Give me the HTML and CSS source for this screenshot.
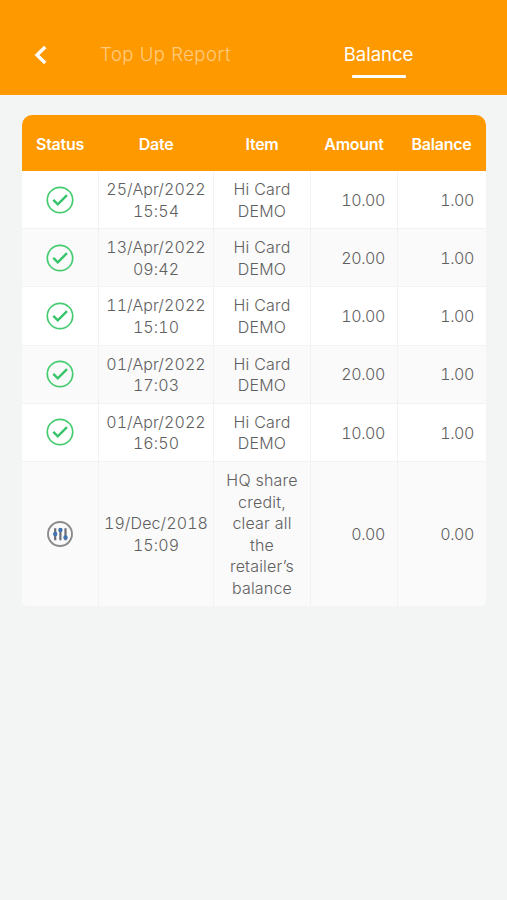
FILE: index.html
```html
<!DOCTYPE html>
<html lang="en">
<head>
    <meta charset="UTF-8">
    <meta name="viewport" content="width=device-width, initial-scale=1.0">
    <title>Balance</title>
    <link rel="stylesheet" href="styles.css">
</head>
<body>
    <svg width="0" height="0" class="icon-defs">
        <symbol id="success" viewBox="0 0 28 28">
            <circle cx="14" cy="14" r="12.7" fill="none" stroke="#45cc71" stroke-width="1.7"/>
            <path d="M7.3 13.8l4.5 4.5 9.2-9.2" fill="none" stroke="#35c568" stroke-width="2.4"/>
        </symbol>
        <symbol id="adjust" viewBox="0 0 28 28">
            <circle cx="14" cy="14" r="12" fill="none" stroke="#8b8b8b" stroke-width="1.9"/>
            <path d="M9.2 8.3v12M14.4 8.3v12M19.5 8.3v12" stroke="#696d73" stroke-width="2.2"/>
            <g fill="#4173b0">
                <circle cx="9.2" cy="14" r="2.2"/>
                <circle cx="14.4" cy="10" r="2.2"/>
                <circle cx="19.5" cy="17.5" r="2.2"/>
            </g>
        </symbol>
    </svg>

    <div class="header">
        <a class="back">
            <svg width="14" height="20" viewBox="0 0 14 20"><path d="M11.2 2L3 10l8.2 8" fill="none" stroke="#fff" stroke-width="3.4"/></svg>
        </a>
        <div class="tabs">
            <a class="tab">Top Up Report</a>
            <a class="tab active">Balance</a>
        </div>
    </div>

    <div class="report">
        <table>
            <colgroup>
                <col class="col-status">
                <col class="col-date">
                <col class="col-item">
                <col class="col-amount">
                <col class="col-balance">
            </colgroup>
            <thead>
                <tr>
                    <th>Status</th>
                    <th>Date</th>
                    <th>Item</th>
                    <th>Amount</th>
                    <th>Balance</th>
                </tr>
            </thead>
            <tbody>
                <tr>
                    <td><svg class="icon"><use href="#success"/></svg></td>
                    <td class="date">25/Apr/2022<br>15:54</td>
                    <td>Hi Card<br>DEMO</td>
                    <td class="num">10.00</td>
                    <td class="num">1.00</td>
                </tr>
                <tr>
                    <td><svg class="icon"><use href="#success"/></svg></td>
                    <td class="date">13/Apr/2022<br>09:42</td>
                    <td>Hi Card<br>DEMO</td>
                    <td class="num">20.00</td>
                    <td class="num">1.00</td>
                </tr>
                <tr>
                    <td><svg class="icon"><use href="#success"/></svg></td>
                    <td class="date">11/Apr/2022<br>15:10</td>
                    <td>Hi Card<br>DEMO</td>
                    <td class="num">10.00</td>
                    <td class="num">1.00</td>
                </tr>
                <tr>
                    <td><svg class="icon"><use href="#success"/></svg></td>
                    <td class="date">01/Apr/2022<br>17:03</td>
                    <td>Hi Card<br>DEMO</td>
                    <td class="num">20.00</td>
                    <td class="num">1.00</td>
                </tr>
                <tr>
                    <td><svg class="icon"><use href="#success"/></svg></td>
                    <td class="date">01/Apr/2022<br>16:50</td>
                    <td>Hi Card<br>DEMO</td>
                    <td class="num">10.00</td>
                    <td class="num">1.00</td>
                </tr>
                <tr>
                    <td><svg class="icon"><use href="#adjust"/></svg></td>
                    <td class="date">19/Dec/2018<br>15:09</td>
                    <td>HQ share<br>credit,<br>clear all<br>the<br>retailer’s<br>balance</td>
                    <td class="num">0.00</td>
                    <td class="num">0.00</td>
                </tr>
            </tbody>
        </table>
    </div>
</body>
</html>
```
FILE: styles.css
```css
* {
    box-sizing: border-box;
}
body {
    margin: 0;
    min-height: 100vh;
    background-color: #f3f5f5;
    color: #606060;
    font-family: 'Inter', 'Liberation Sans', sans-serif;
    font-size: 16px;
    font-weight: 300;
}
.icon-defs {
    display: block;
}
.header {
    display: flex;
    height: 95px;
    padding-top: 38px;
    background-color: #ff9900;
}
.back {
    width: 59px;
    padding: 7px 0 0 34px;
}
.back svg {
    display: block;
}
.tabs {
    display: flex;
    flex: 1;
}
.tab {
    display: flex;
    flex-direction: column;
    align-items: center;
    width: 213px;
    color: #ffcb80;
    font-size: 18.5px;
    line-height: 32px;
    letter-spacing: 0.5px;
    white-space: nowrap;
}
.tab.active {
    color: #fff;
    font-weight: 400;
    letter-spacing: 0;
}
.tab.active::after {
    content: '';
    width: 54px;
    height: 3px;
    margin-top: 5px;
    background-color: #fff;
    border-radius: 1px;
}
.report {
    width: 464px;
    margin: 20px 0 0 22px;
    border-radius: 10px 10px 4px 4px;
    overflow: hidden;
}
table {
    width: 100%;
    table-layout: fixed;
    border-collapse: separate;
    border-spacing: 0;
}
.col-status {
    width: 77px;
}
.col-date {
    width: 115px;
}
.col-item {
    width: 97px;
}
.col-amount {
    width: 87px;
}
.col-balance {
    width: 88px;
}
th {
    height: 56px;
    padding: 2px 1px 0 0;
    background-color: #ff9900;
    color: #fff;
    font-weight: 600;
    letter-spacing: -0.25px;
    text-align: center;
}
td {
    height: 58px;
    padding: 8px 0 6px;
    background-color: #fff;
    border-right: 1px solid #f1f2f4;
    border-bottom: 1px solid #f1f2f4;
    line-height: 21.6px;
    letter-spacing: 0.2px;
    text-align: center;
    vertical-align: middle;
}
td:last-child {
    border-right: none;
}
tr:last-child td {
    border-bottom: none;
}
tbody tr:nth-child(even) td {
    background-color: #fafafa;
}
td.date,
td.num {
    font-variant-numeric: tabular-nums;
}
td.date {
    letter-spacing: 0.1px;
}
td.num {
    padding-right: 12px;
    letter-spacing: -0.4px;
    text-align: right;
}
.icon {
    display: block;
    width: 28px;
    height: 28px;
    margin: -2px auto 0;
}
```
